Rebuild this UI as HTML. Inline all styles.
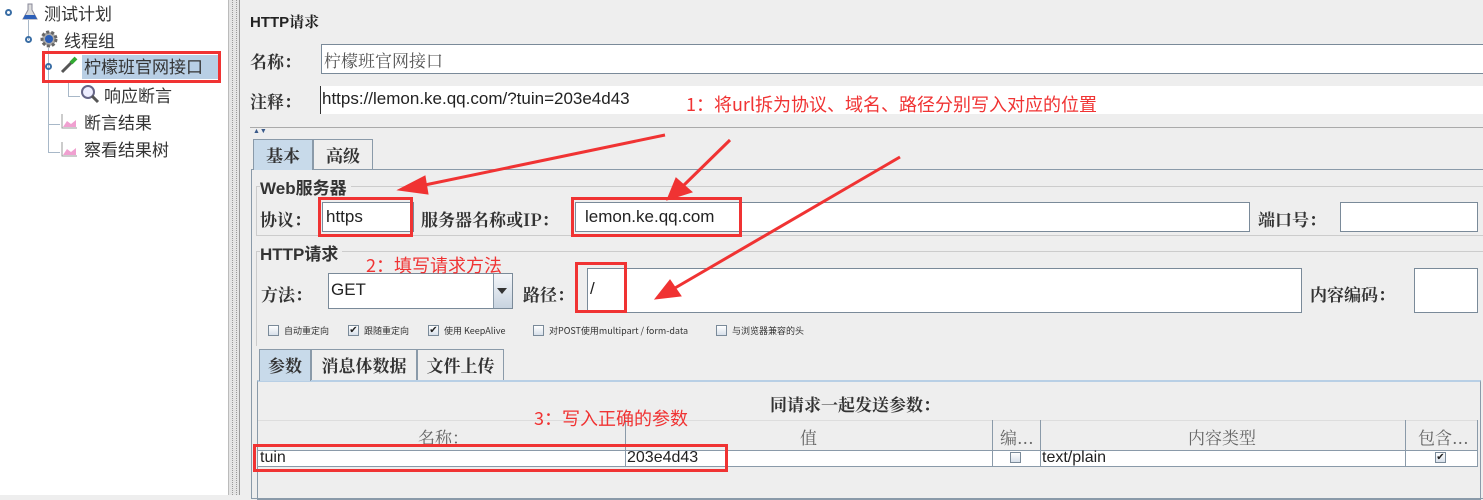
<!DOCTYPE html>
<html><head><meta charset="utf-8"><style>
*{box-sizing:border-box;margin:0;padding:0}
body{width:1483px;height:495px;overflow:hidden;background:#eeeeee;position:relative;font-family:"Liberation Sans","Noto Serif CJK SC","Noto Sans CJK SC",sans-serif;color:#222}
.a{position:absolute;white-space:nowrap}
.in{position:absolute;background:#fff;border:1px solid #7a8a99}
.lbl{position:absolute;font-size:17px;font-weight:bold;white-space:nowrap;font-family:"Noto Serif CJK SC",serif;color:#333}
.red{position:absolute;border:3px solid #f03333}
.rt{position:absolute;color:#f03333;font-size:18px;font-family:"Noto Sans CJK SC",sans-serif;white-space:nowrap}
.cb{position:absolute;width:11px;height:11px;border:1px solid #7a8a99;background:linear-gradient(#fff,#d8e0ea);font-size:10px;line-height:9px;text-align:center}
.cbt{position:absolute;font-size:9px;font-family:"Noto Sans CJK SC",sans-serif;white-space:nowrap;color:#333}
.tab{position:absolute;border:1px solid #8a9aa9;border-bottom:none;font-size:17px;font-family:"Noto Serif CJK SC",serif;font-weight:bold;text-align:center;color:#333}
.tr{position:absolute;font-size:17px;font-family:"Noto Sans CJK SC",sans-serif;white-space:nowrap;color:#333}
</style></head><body>
<div class="a" style="left:0;top:0;width:228px;height:495px;background:#fff"></div>
<div class="a" style="left:228px;top:0;width:12px;height:495px;background:#e4e4e4;border-left:1px solid #bbb;border-right:1px solid #999"></div>
<div class="a" style="left:232px;top:0;width:1px;height:495px;border-left:1px dotted #999"></div>
<div class="a" style="left:236px;top:0;width:1px;height:495px;border-left:1px dotted #999"></div>
<div class="a" style="left:28px;top:20px;height:20px;border-left:1px solid #a8b8c8"></div>
<div class="a" style="left:48px;top:48px;height:105px;border-left:1px solid #a8b8c8"></div>
<div class="a" style="left:48px;top:124px;width:12px;border-top:1px solid #a8b8c8"></div>
<div class="a" style="left:48px;top:152px;width:12px;border-top:1px solid #a8b8c8"></div>
<div class="a" style="left:68px;top:80px;height:17px;border-left:1px solid #a8b8c8"></div>
<div class="a" style="left:68px;top:96px;width:12px;border-top:1px solid #a8b8c8"></div>
<div class="a" style="left:5px;top:9px;width:7px;height:7px;border:2px solid #3a6ea5;border-radius:50%"></div>
<div class="a" style="left:25px;top:36px;width:7px;height:7px;border:2px solid #3a6ea5;border-radius:50%"></div>
<div class="a" style="left:45px;top:63px;width:7px;height:7px;border:2px solid #3a6ea5;border-radius:50%"></div>
<svg class="a" style="left:22px;top:3px" width="16" height="18"><path d="M6 1h4v6l5 9H1l5-9z" fill="#ddd" stroke="#889"/><path d="M3 12h10l2 4H1z" fill="#2c5fb8"/></svg>
<svg class="a" style="left:40px;top:30px" width="18" height="18"><circle cx="9" cy="9" r="7" fill="#aaa" stroke="#666" stroke-dasharray="3 2" stroke-width="3"/><circle cx="9" cy="9" r="4" fill="#2c5fb8"/></svg>
<svg class="a" style="left:60px;top:56px" width="18" height="18"><path d="M2 16L12 6" stroke="#555" stroke-width="3"/><path d="M11 7l5-5" stroke="#3a3" stroke-width="4"/></svg>
<svg class="a" style="left:80px;top:84px" width="20" height="20"><circle cx="8" cy="8" r="6" fill="#eef" stroke="#668" stroke-width="2"/><path d="M12 12l6 6" stroke="#555" stroke-width="3"/></svg>
<svg class="a" style="left:60px;top:112px" width="18" height="18"><path d="M2 2v14h15" stroke="#999" fill="none"/><path d="M3 15l4-6 4 3 5-4v7z" fill="#f0a0d0"/></svg>
<svg class="a" style="left:60px;top:140px" width="18" height="18"><path d="M2 2v14h15" stroke="#999" fill="none"/><path d="M3 15l4-6 4 3 5-4v7z" fill="#f0a0d0"/></svg>
<div class="tr" style="left:44px;top:0px">测试计划</div>
<div class="tr" style="left:64px;top:27px">线程组</div>
<div class="a" style="left:82px;top:55px;width:136px;height:24px;background:#b8cfe5"></div>
<div class="tr" style="left:84px;top:53px">柠檬班官网接口</div>
<div class="tr" style="left:104px;top:82px">响应断言</div>
<div class="tr" style="left:84px;top:109px">断言结果</div>
<div class="tr" style="left:84px;top:136px">察看结果树</div>
<div class="red" style="left:42px;top:51px;width:179px;height:32px"></div>

<div class="a" style="left:250px;top:11px;font-size:15px;font-weight:bold">HTTP请求</div>
<div class="lbl" style="left:250px;top:48px">名称：</div>
<div class="in" style="left:321px;top:44px;width:1170px;height:30px;font-size:17px;padding:2px 2px;font-family:'Noto Serif CJK SC',serif;color:#555">柠檬班官网接口</div>
<div class="lbl" style="left:250px;top:88px">注释：</div>
<div class="a" style="left:320px;top:86px;width:1170px;height:28px;background:#fff;font-size:17px;padding:3px 1px;border-left:1px solid #333">https://lemon.ke.qq.com/?tuin=203e4d43</div>
<div class="a" style="left:250px;top:127px;width:1233px;border-top:1px solid #aaa"></div>
<div class="a" style="left:253px;top:128px;font-size:7px;color:#3a5a8a">▲▼</div>
<div class="a" style="left:251px;top:169px;width:1240px;height:330px;border:1px solid #8a9aa9"></div>
<div class="tab" style="left:253px;top:139px;width:60px;height:31px;background:#c8daea;line-height:30px">基本</div>
<div class="tab" style="left:313px;top:139px;width:60px;height:30px;line-height:30px">高级</div>
<div class="a" style="left:256px;top:186px;width:1230px;height:50px;border:1px solid #ccc"></div>
<div class="lbl" style="left:260px;top:174px;background:#eee;padding-right:4px;font-family:'Liberation Sans','Noto Sans CJK SC',sans-serif">Web服务器</div>
<div class="lbl" style="left:260px;top:206px">协议：</div>
<div class="in" style="left:322px;top:202px;width:92px;height:30px;font-size:17px;padding:4px 3px">https</div>
<div class="lbl" style="left:421px;top:206px">服务器名称或IP：</div>
<div class="in" style="left:575px;top:202px;width:675px;height:30px;font-size:17px;padding:4px 9px">lemon.ke.qq.com</div>
<div class="lbl" style="left:1258px;top:206px">端口号：</div>
<div class="in" style="left:1340px;top:202px;width:138px;height:30px"></div>
<div class="a" style="left:256px;top:251px;width:1230px;height:95px;border-top:1px solid #ccc;border-left:1px solid #ccc"></div>
<div class="lbl" style="left:260px;top:240px;background:#eee;padding-right:4px;font-family:'Liberation Sans','Noto Sans CJK SC',sans-serif">HTTP请求</div>
<div class="lbl" style="left:261px;top:281px">方法：</div>
<div class="in" style="left:328px;top:273px;width:185px;height:36px;font-size:17px;padding:6px 2px">GET</div>
<div class="a" style="left:493px;top:274px;width:19px;height:34px;background:linear-gradient(#f4f6f9,#c8d4e0);border-left:1px solid #8a9aa9"></div>
<div class="a" style="left:497px;top:288px;border:5px solid transparent;border-top:6px solid #333"></div>
<div class="lbl" style="left:523px;top:281px">路径：</div>
<div class="in" style="left:587px;top:268px;width:715px;height:45px;font-size:17px;padding:10px 2px">/</div>
<div class="lbl" style="left:1310px;top:281px">内容编码：</div>
<div class="in" style="left:1414px;top:268px;width:64px;height:45px"></div>
<div class="cb" style="left:268px;top:325px"></div><div class="cbt" style="left:284px;top:324px">自动重定向</div>
<div class="cb" style="left:348px;top:325px">✔</div><div class="cbt" style="left:364px;top:324px">跟随重定向</div>
<div class="cb" style="left:428px;top:325px">✔</div><div class="cbt" style="left:444px;top:324px">使用 KeepAlive</div>
<div class="cb" style="left:533px;top:325px"></div><div class="cbt" style="left:549px;top:324px">对POST使用multipart / form-data</div>
<div class="cb" style="left:716px;top:325px"></div><div class="cbt" style="left:732px;top:324px">与浏览器兼容的头</div>
<div class="a" style="left:257px;top:380px;width:1224px;height:120px;border:1px solid #8a9aa9;border-top:2px solid #b8cfe5"></div>
<div class="tab" style="left:259px;top:349px;width:52px;height:32px;background:#c8daea;line-height:30px">参数</div>
<div class="tab" style="left:311px;top:349px;width:106px;height:31px;line-height:30px">消息体数据</div>
<div class="tab" style="left:417px;top:349px;width:87px;height:31px;line-height:30px">文件上传</div>
<div class="lbl" style="left:770px;top:391px">同请求一起发送参数：</div>
<div class="a" style="left:258px;top:420px;width:1220px;height:47px;border-top:1px solid #ddd;border-bottom:1px solid #8a9aa9"></div>
<div class="a" style="left:258px;top:450px;width:1220px;height:16px;background:#fff;border-top:1px solid #8a9aa9"></div>
<div class="a" style="left:625px;top:420px;height:47px;border-left:1px solid #8a9aa9"></div>
<div class="a" style="left:992px;top:420px;height:47px;border-left:1px solid #8a9aa9"></div>
<div class="a" style="left:1040px;top:420px;height:47px;border-left:1px solid #8a9aa9"></div>
<div class="a" style="left:1405px;top:420px;height:47px;border-left:1px solid #8a9aa9"></div>
<div class="a" style="left:1477px;top:420px;height:47px;border-left:1px solid #8a9aa9"></div>
<div class="tr" style="left:418px;top:424px;color:#666;font-family:'Noto Serif CJK SC',serif">名称：</div>
<div class="tr" style="left:800px;top:424px;color:#666;font-family:'Noto Serif CJK SC',serif">值</div>
<div class="tr" style="left:1000px;top:424px;color:#666;font-family:'Noto Serif CJK SC',serif">编...</div>
<div class="tr" style="left:1188px;top:424px;color:#666;font-family:'Noto Serif CJK SC',serif">内容类型</div>
<div class="tr" style="left:1418px;top:424px;color:#666;font-family:'Noto Serif CJK SC',serif">包含...</div>
<div class="a" style="left:260px;top:449px;font-size:16px">tuin</div>
<div class="a" style="left:627px;top:449px;font-size:16px">203e4d43</div>
<div class="a" style="left:1042px;top:449px;font-size:16px">text/plain</div>
<div class="cb" style="left:1010px;top:452px"></div>
<div class="cb" style="left:1435px;top:452px">✔</div>

<div class="red" style="left:318px;top:197px;width:95px;height:40px"></div>
<div class="red" style="left:571px;top:197px;width:171px;height:40px"></div>
<div class="red" style="left:575px;top:262px;width:52px;height:51px"></div>
<div class="red" style="left:253px;top:444px;width:475px;height:28px"></div>
<div class="rt" style="left:686px;top:91px">1：将url拆为协议、域名、路径分别写入对应的位置</div>
<div class="rt" style="left:366px;top:252px">2：填写请求方法</div>
<div class="rt" style="left:534px;top:405px">3：写入正确的参数</div>
<svg class="a" style="left:0;top:0" width="1483" height="495">
<g fill="#f03333" stroke="#f03333">
<line x1="665" y1="135" x2="420" y2="186" stroke-width="3"/>
<polygon points="398,190 425,176 428,194"/>
<line x1="730" y1="140" x2="682" y2="187" stroke-width="3"/>
<polygon points="667,200 676,178 692,192"/>
<line x1="900" y1="157" x2="675" y2="288" stroke-width="3"/>
<polygon points="655,299 670,280 681,296"/>
</g></svg>
</body></html>
